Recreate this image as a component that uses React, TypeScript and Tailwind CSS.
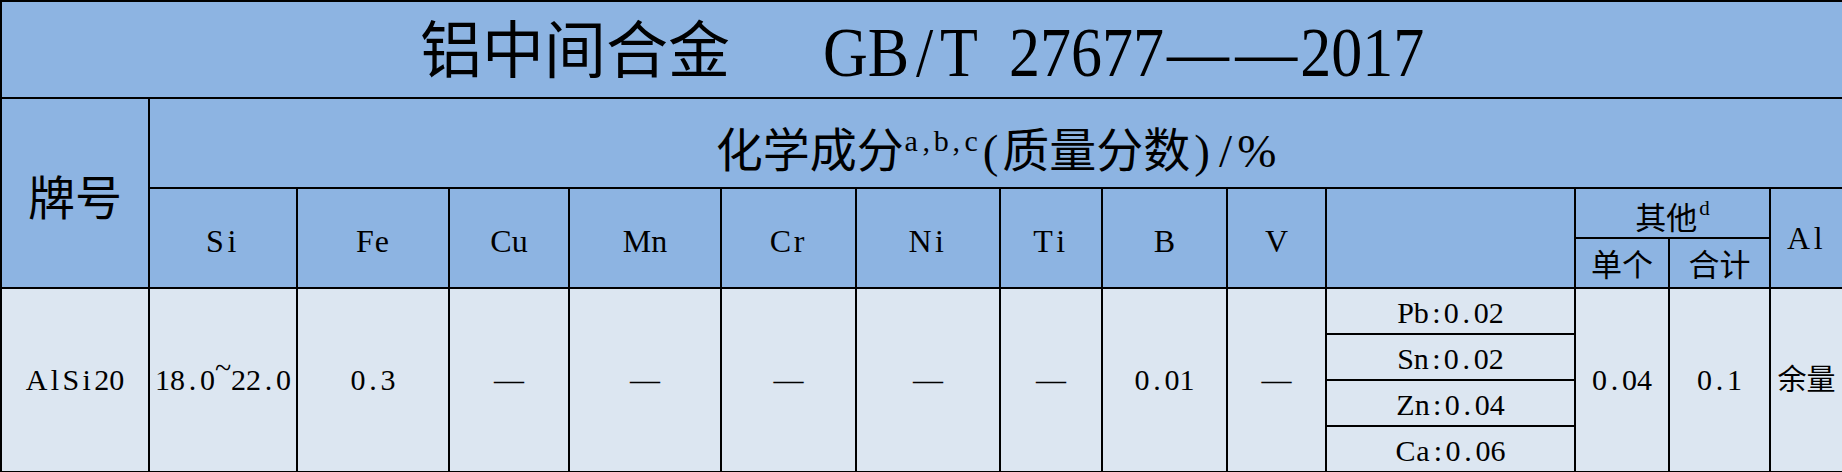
import React from "react";

// Excel-like sheet: every Latin character gets at least a half-width box, as in SimSun
const Half = ({ text }: { text: string }) => (
  <>
    {Array.from(text).map((ch, i) => (
      <span
        key={i}
        className={
          "inline-block min-w-[0.5em] text-center" +
          (ch === "~" ? " relative -top-[0.4em]" : "")
        }
      >
        {ch === " " ? "\u00a0" : ch}
      </span>
    ))}
  </>
);

const head = "border-2 border-black bg-[#8db4e2] p-0 text-center align-middle";
const data = "border-2 border-black bg-[#dce6f1] p-0 text-center align-middle";

const elements = ["Si", "Fe", "Cu", "Mn", "Cr", "Ni", "Ti", "B", "V"];
const values = ["18.0~22.0", "0.3", "—", "—", "—", "—", "—", "0.01", "—"];
const others = ["Pb:0.02", "Sn:0.02", "Zn:0.04", "Ca:0.06"];
const widths = [148, 148, 152, 120, 152, 135, 144, 102, 125, 99, 249, 94, 101, 73];

const Value = ({ v }: { v: string }) =>
  v === "—" ? <span className="text-[30px]">—</span> : <span className="text-[30px]"><Half text={v} /></span>;

export default function App() {
  return (
    <div className="w-[1842px] h-[472px] overflow-hidden bg-white font-['Liberation_Serif','Noto_Sans_CJK_SC',serif] text-black leading-none">
      <table className="w-[1842px] table-fixed border-collapse">
        <colgroup>
          {widths.map((w, i) => (
            <col key={i} style={{ width: w }} />
          ))}
        </colgroup>
        <tbody>
          <tr className="h-[97px]">
            <td colSpan={14} className={head}>
              <span className="text-[62px] relative top-[2px]">
                铝中间合金
                <span className="inline-block scale-y-[1.12]">
                  <Half text="   GB/T 27677" />
                  <span className="inline-block w-[1.1em] text-center">—</span>
                  <span className="inline-block w-[1.1em] text-center">—</span>
                  <Half text="2017" />
                </span>
              </span>
            </td>
          </tr>
          <tr className="h-[90px]">
            <td rowSpan={3} className={head}>
              <span className="text-[47px] relative top-[6px]">牌号</span>
            </td>
            <td colSpan={13} className={head}>
              <span className="text-[47px] relative top-[8px]">
                化学成分
                <span className="text-[30px] relative -top-[16px]">
                  <Half text="a,b,c" />
                </span>
                <Half text="(" />
                质量分数
                <Half text=")/%" />
              </span>
            </td>
          </tr>
          <tr className="h-[50px]">
            {elements.map((e) => (
              <td key={e} rowSpan={2} className={head}>
                <span className="text-[32px] relative top-[3px]">
                  <Half text={e} />
                </span>
              </td>
            ))}
            <td rowSpan={2} className={head}></td>
            <td colSpan={2} className={head}>
              <span className="text-[31px] relative top-[5px]">
                其他
                <span className="text-[21px] relative -top-[14px] ml-[2px]">d</span>
              </span>
            </td>
            <td rowSpan={2} className={head}>
              <span className="text-[32px]">
                <Half text="Al" />
              </span>
            </td>
          </tr>
          <tr className="h-[50px]">
            <td className={head}>
              <span className="text-[31px] relative top-[2px]">单个</span>
            </td>
            <td className={head}>
              <span className="text-[31px] relative top-[2px]">合计</span>
            </td>
          </tr>
          {others.map((o, i) => (
            <tr key={o} className="h-[46px]">
              {i === 0 && (
                <>
                  <td rowSpan={4} className={data}>
                    <span className="text-[30px]">
                      <Half text="AlSi20" />
                    </span>
                  </td>
                  {values.map((v, j) => (
                    <td key={j} rowSpan={4} className={data}>
                      <Value v={v} />
                    </td>
                  ))}
                </>
              )}
              <td className={data}>
                <span className="text-[30px] relative top-[2px]">
                  <Half text={o} />
                </span>
              </td>
              {i === 0 && (
                <>
                  <td rowSpan={4} className={data}>
                    <Value v="0.04" />
                  </td>
                  <td rowSpan={4} className={data}>
                    <Value v="0.1" />
                  </td>
                  <td rowSpan={4} className={data}>
                    <span className="text-[29px]">余量</span>
                  </td>
                </>
              )}
            </tr>
          ))}
        </tbody>
      </table>
    </div>
  );
}
